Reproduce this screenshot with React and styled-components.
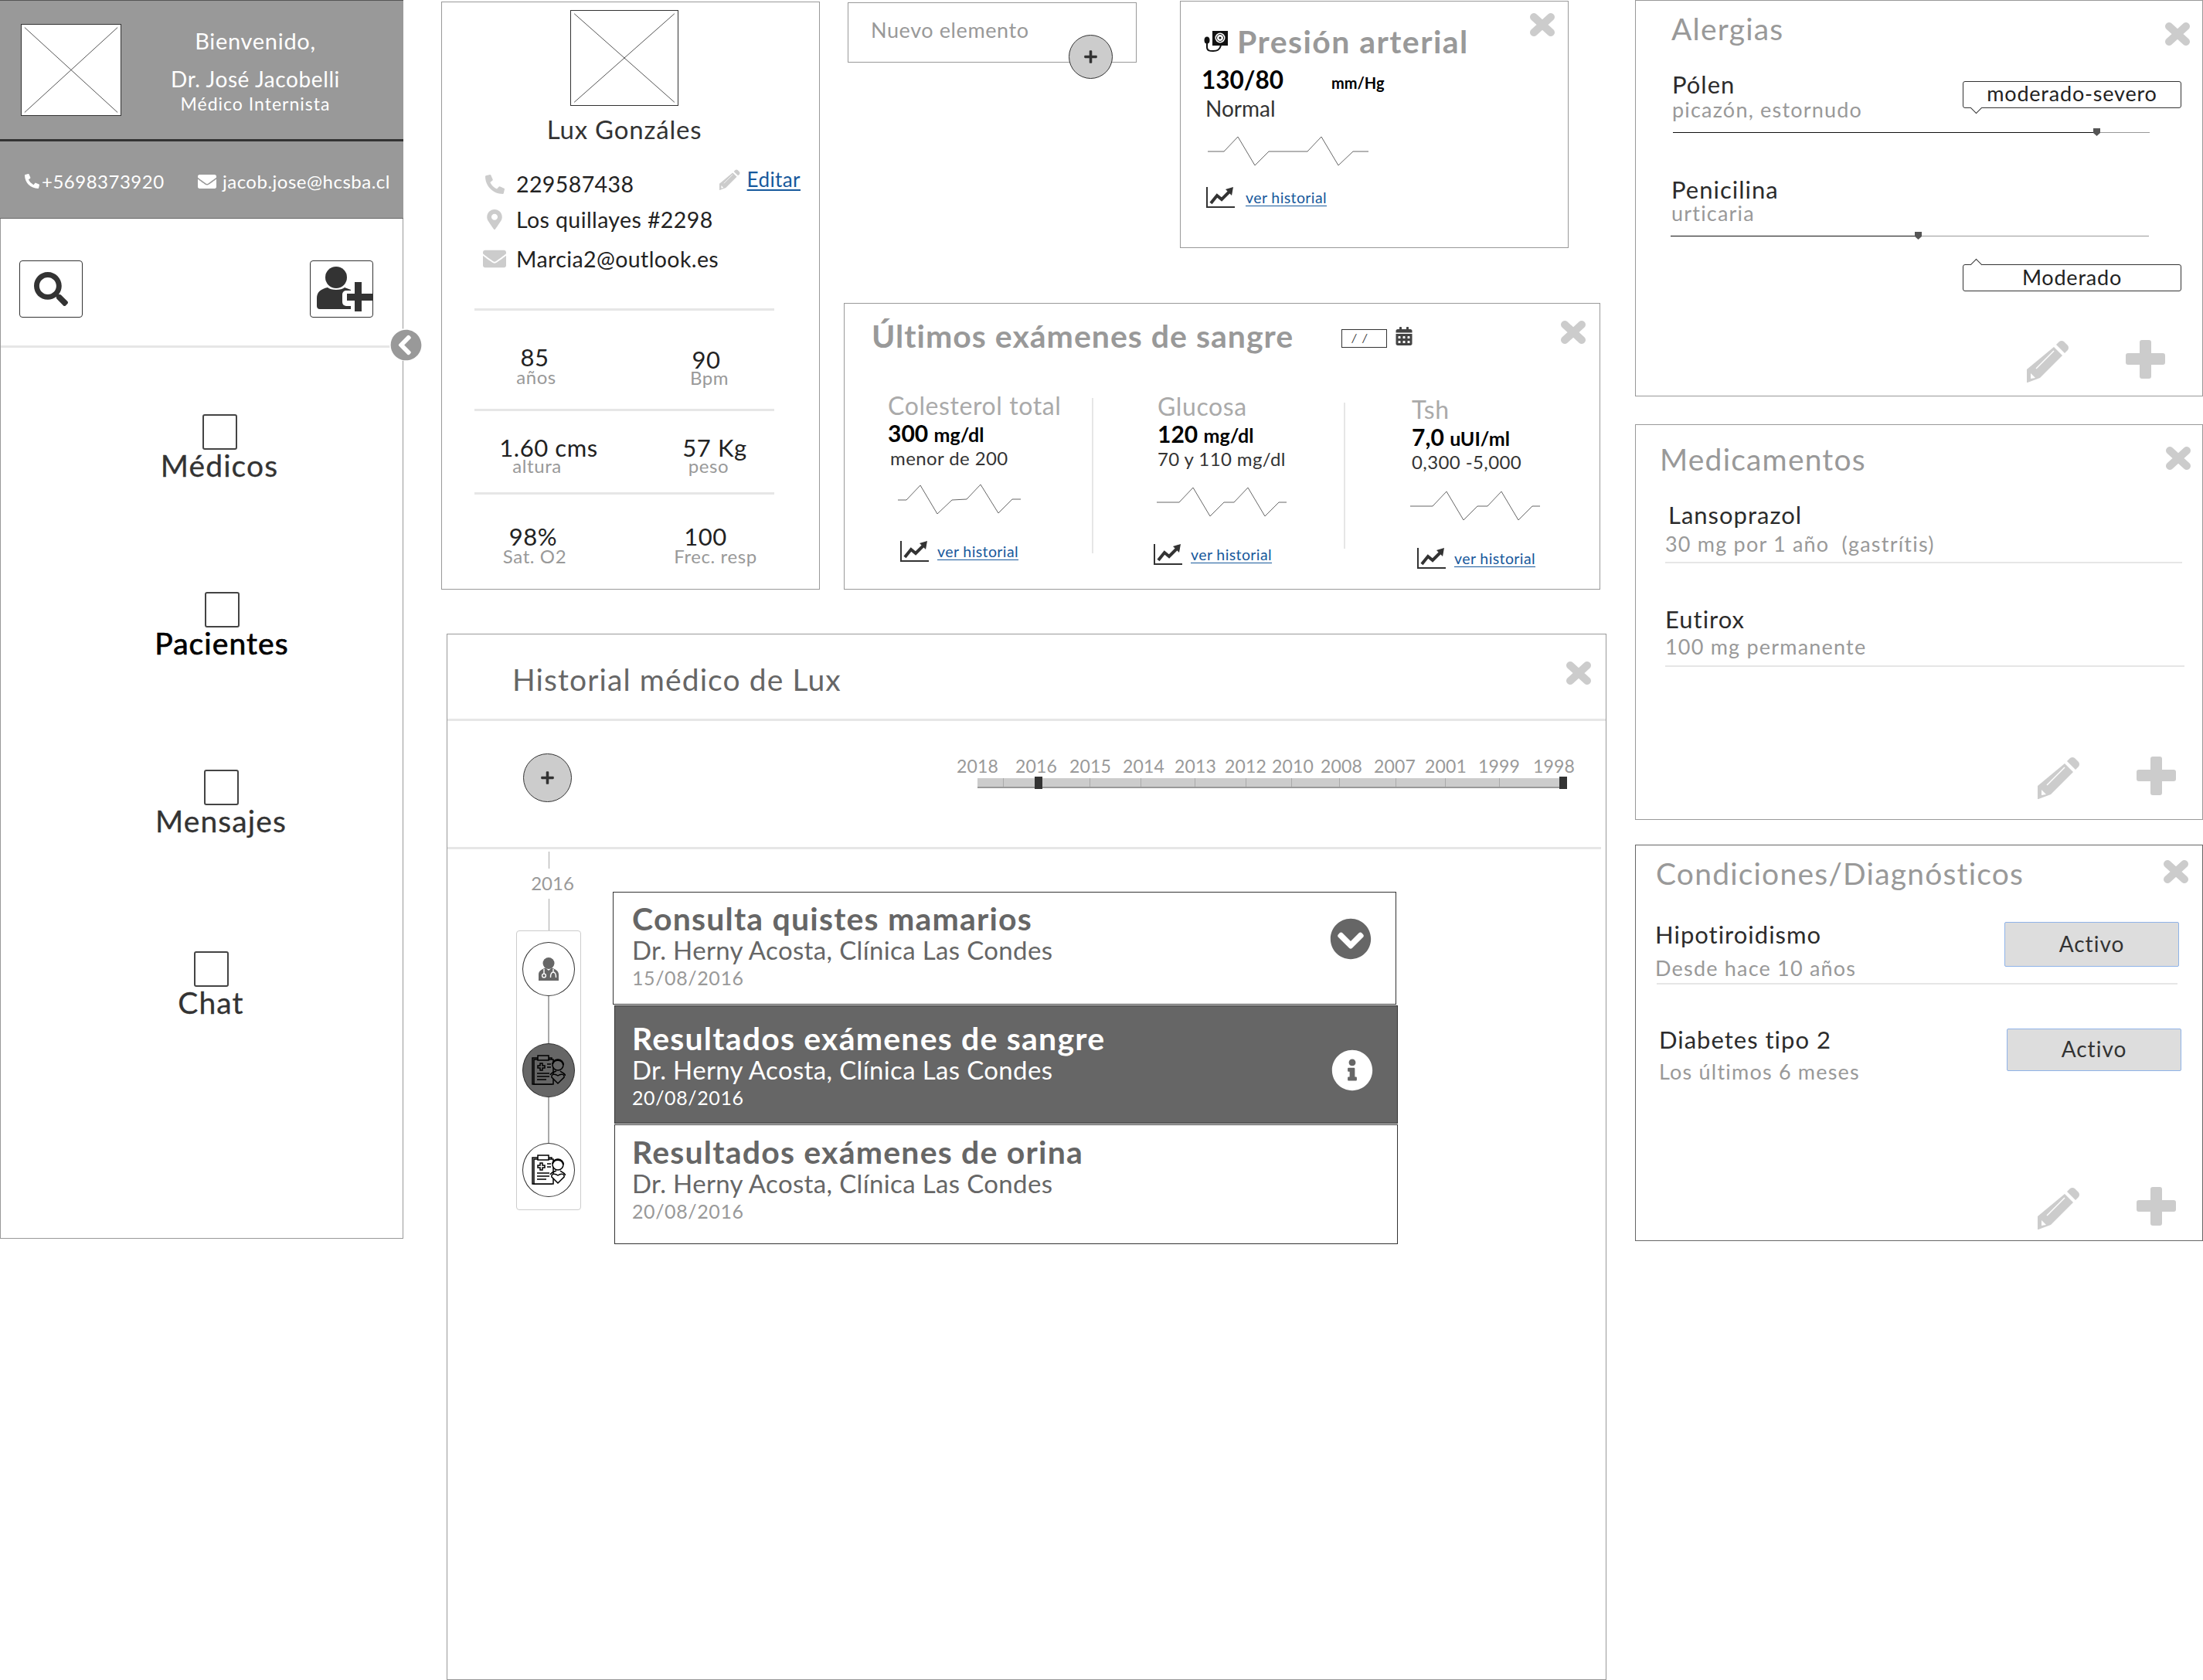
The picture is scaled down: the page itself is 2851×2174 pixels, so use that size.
import React from 'react';
import styled, { createGlobalStyle } from 'styled-components';
import {
  FaPhoneAlt,
  FaEnvelope,
  FaMapMarkerAlt,
  FaSearch,
  FaChevronCircleLeft,
  FaChevronCircleDown,
  FaInfoCircle,
  FaCalendarAlt,
  FaPlus,
} from 'react-icons/fa';

const GlobalStyle = createGlobalStyle`
  html, body { margin: 0; padding: 0; background: #fff; }
  body {
    font-family: "Lato", "Open Sans", sans-serif;
    color: #333;
  }
  * { box-sizing: border-box; }
`;

const CloseIcon = () => (
  <svg width="34" height="32" viewBox="0 0 34 32">
    <path d="M6 6 L28 26 M28 6 L6 26" stroke="#ccc" strokeWidth="10" strokeLinecap="round" fill="none" />
  </svg>
);

const BigPlus = () => (
  <svg width="51" height="50" viewBox="0 0 51 50">
    <rect x="18" y="0" width="15" height="50" rx="3" fill="#ccc" />
    <rect x="0" y="17" width="51" height="15" rx="3" fill="#ccc" />
  </svg>
);

const PencilIcon = ({ size = 55 }) => (
  <svg width={size} height={size} viewBox="0 0 55 55">
    <path d="M38 6 L42 2 Q45 0 48 2 L53 7 Q55 10 53 13 L49 17 Z" fill="#ccc" />
    <path d="M35 9 L46 20 L17 49 L1 55 L0 55 L0 38 Z" fill="#ccc" />
    <path d="M12 37 L35 14" stroke="#fff" strokeWidth="1.5" />
    <path d="M5 43 L11 49 L5 50 Z" fill="#fff" />
  </svg>
);

const Crossed = () => (
  <svg width="100%" height="100%" viewBox="0 0 100 100" preserveAspectRatio="none">
    <path d="M3 3 L97 97 M97 3 L3 97" stroke="#555" strokeWidth="1" vectorEffect="non-scaling-stroke" fill="none" />
  </svg>
);

const AddUserIcon = () => (
  <svg width="80" height="72" viewBox="0 0 80 72">
    <circle cx="33" cy="21" r="14" fill="#333" />
    <path d="M8 58 V48 C8 40 13 36 22 34 C26 38 40 38 44 34 L52 37 V62 H12 C9 62 8 60 8 58 Z" fill="#333" />
    <rect x="41" y="38" width="20" height="20" rx="5" fill="#fff" />
    <rect x="57" y="27" width="9" height="38" fill="#333" />
    <rect x="47" y="42" width="33" height="9" fill="#333" />
  </svg>
);

const CuffIcon = () => (
  <svg width="32" height="30" viewBox="0 0 32 30">
    <rect x="11" y="1" width="20" height="19" fill="#111" />
    <circle cx="21" cy="10" r="6.5" fill="#fff" />
    <circle cx="21" cy="10" r="4.5" fill="none" stroke="#111" strokeWidth="1" />
    <circle cx="21" cy="10" r="1.5" fill="#111" />
    <ellipse cx="4" cy="13" rx="3.5" ry="4.5" fill="#111" />
    <path d="M4 16 V22 C4 27 8 27 12 27 C17 27 20 26 22 20" stroke="#111" strokeWidth="2" fill="none" />
  </svg>
);

const DoctorIcon = () => (
  <svg width="28" height="30" viewBox="0 0 28 30">
    <circle cx="14" cy="7.5" r="7.5" fill="#666" />
    <path d="M1 30 V22 C1 17 6 15 10 13.5 L14 17 L18 13.5 C22 15 27 17 27 22 V30 Z" fill="#666" />
    <path d="M8 15 V21 M20 15 V19 C17 19 16.5 22 16.5 26 M20 19 C23 19 23.5 22 23.5 26" stroke="#fff" strokeWidth="1.4" fill="none" />
    <circle cx="8" cy="23.5" r="2.4" fill="none" stroke="#fff" strokeWidth="1.4" />
  </svg>
);

const ReportIcon = ({ $bg }) => (
  <svg width="44" height="40" viewBox="0 0 44 40">
    <rect x="1" y="4" width="25" height="34" fill={$bg} stroke="#000" strokeWidth="1.5" />
    <rect x="3" y="6" width="25" height="32" fill={$bg} stroke="#000" strokeWidth="1.5" />
    <rect x="8" y="1" width="14" height="6" fill={$bg} stroke="#000" strokeWidth="1.5" />
    <path
      d="M8 14 h3 v-3 h3 v3 h3 v3 h-3 v3 h-3 v-3 h-3 Z M20 12 h5 M20 16 h5 M7 24 h16 M7 28 h16 M7 32 h12"
      stroke="#000"
      strokeWidth="1.5"
      fill="none"
    />
    <circle cx="34" cy="13" r="7" fill={$bg} stroke="#000" strokeWidth="1.5" />
    <path d="M27 12 C29 5 40 5 41 13" stroke="#000" strokeWidth="2.2" fill="none" />
    <path d="M24 26 C26 22 30 22 32 21 M37 21 C39 23 43 24 44 27" stroke="#000" strokeWidth="1.5" fill="none" />
    <path d="M34 37 L26 29 C25 25 30 24 34 27 C38 24 43 25 42 29 Z" fill={$bg} stroke="#000" strokeWidth="1.5" />
  </svg>
);

const TrendIcon = () => (
  <svg width="37" height="27" viewBox="0 0 37 27">
    <path d="M1 0 V26 H37" fill="none" stroke="#333" strokeWidth="2" />
    <path d="M6 21 L14 11 L20 16 L30 6" fill="none" stroke="#333" strokeWidth="4" />
    <path d="M25 3 L35 0 L33 11 Z" fill="#333" />
  </svg>
);

const Spark = ({ xs, ys }) => (
  <SparkSvg width={xs[xs.length - 1]} height="39" viewBox={`0 0 ${xs[xs.length - 1]} 39`}>
    <polyline points={xs.map((x, i) => `${x},${ys[i]}`).join(' ')} fill="none" stroke="#666" strokeWidth="1" />
  </SparkSvg>
);

const HISTORY_LINK = 'ver historial';
const SPARK_A = {
  xs: [0, 11, 29, 51, 70, 89, 107, 130, 148, 159],
  ys: [20, 20, 1, 38, 20, 19, 0, 37, 19, 19],
};
const SPARK_B = {
  xs: [0, 29, 47, 69, 87, 100, 118, 140, 158, 168],
  ys: [19, 19, 0, 37, 19, 19, 0, 37, 19, 19],
};
const SPARK_C = {
  xs: [0, 21, 39, 61, 79, 129, 147, 169, 188, 208],
  ys: [19, 19, 0, 37, 19, 19, 0, 37, 19, 19],
};

const NAV = [
  { label: 'Médicos', top: 86, shift: 46 },
  { label: 'Pacientes', top: 143, shift: 52, active: true },
  { label: 'Mensajes', top: 143, shift: 50 },
  { label: 'Chat', top: 148, shift: 24 },
];

const EXAMS = [
  {
    name: 'Colesterol total', value: '300', unit: 'mg/dl', range: 'menor de 200', spark: SPARK_A,
    left: 56, width: 264, nameTop: 45, rangeDx: 3, sparkTop: 19, sparkDx: 13, linkTop: 34, linkDx: 16,
  },
  {
    name: 'Glucosa', value: '120', unit: 'mg/dl', range: '70 y 110 mg/dl', spark: SPARK_B,
    left: 83, width: 241, nameTop: 46, rangeDx: 0, sparkTop: 22, sparkDx: -1, linkTop: 34, linkDx: -5,
  },
  {
    name: 'Tsh', value: '7,0', unit: 'uUI/ml', range: '0,300 -5,000', spark: SPARK_B,
    left: 86, width: 240, nameTop: 50, rangeDx: 0, sparkTop: 23, sparkDx: -2, linkTop: 34, linkDx: 7,
  },
];

const YEARS = [
  ['2018', 0], ['2016', 24], ['2015', 18], ['2014', 17], ['2013', 15], ['2012', 13],
  ['2010', 9], ['2008', 11], ['2007', 17], ['2001', 14], ['1999', 17], ['1998', 19],
];
const SEGMENTS = [34, 112, 66, 70, 66, 59, 62, 73, 64, 70, 80];

const RECORDS = [
  {
    title: 'Consulta quistes mamarios', date: '15/08/2016', dx: 0, pad: 12, height: 146,
    icon: <FaChevronCircleDown size={54} color="#666" />, iconTop: 33,
  },
  {
    title: 'Resultados exámenes de sangre', date: '20/08/2016', dx: 2, pad: 20, height: 153, dark: true,
    icon: <FaInfoCircle size={54} color="#fff" />, iconTop: 56,
  },
  { title: 'Resultados exámenes de orina', date: '20/08/2016', dx: 2, pad: 13, height: 155 },
];

export default function App() {
  return (
    <Page>
      <GlobalStyle />
      <Sidebar>
        <Welcome>
          <Avatar><Crossed /></Avatar>
          <Greeting>
            <Hello>Bienvenido,</Hello>
            <DoctorName>Dr. José Jacobelli</DoctorName>
            <Specialty>Médico Internista</Specialty>
          </Greeting>
        </Welcome>
        <ContactBar>
          <ContactItem><FaPhoneAlt size={19} />+5698373920</ContactItem>
          <ContactItem $gap={8}><FaEnvelope size={24} />jacob.jose@hcsba.cl</ContactItem>
        </ContactBar>
        <ToolRow>
          <ToolButton><FaSearch size={44} color="#333" /></ToolButton>
          <ToolButton><AddUserIcon /></ToolButton>
        </ToolRow>
        <Collapse><FaChevronCircleLeft size={41} color="#999" /></Collapse>
        <NavList>
          {NAV.map((n) => (
            <NavItem key={n.label} $top={n.top} $shift={n.shift}>
              <NavBox />
              <NavLabel $active={n.active}>{n.label}</NavLabel>
            </NavItem>
          ))}
        </NavList>
      </Sidebar>

      <Middle>
        <TopRow>
          <PatientCard>
            <PatientHead>
              <PatientPhoto><Crossed /></PatientPhoto>
              <PatientName>Lux Gonzáles</PatientName>
            </PatientHead>
            <InfoRow $top={31}>
              <InfoIcon><FaPhoneAlt size={25} color="#ccc" /></InfoIcon>
              <InfoText>229587438</InfoText>
              <EditLink>
                <PencilIcon size={27} />
                <BlueLink $size={26}>Editar</BlueLink>
              </EditLink>
            </InfoRow>
            <InfoRow $top={6}>
              <InfoIcon><FaMapMarkerAlt size={26} color="#ccc" /></InfoIcon>
              <InfoText>Los quillayes #2298</InfoText>
            </InfoRow>
            <InfoRow $top={11}>
              <InfoIcon><FaEnvelope size={32} color="#ccc" /></InfoIcon>
              <InfoText>Marcia2@outlook.es</InfoText>
            </InfoRow>
            <Rule $top={44} />
            <StatRow $height={127} $pad={47}>
              <Stat>
                <StatValue>85</StatValue>
                <StatLabel $gap={2} $dx={2}>años</StatLabel>
              </Stat>
              <Stat $top={3}>
                <StatValue $dx={-3}>90</StatValue>
                <StatLabel $dx={1}>Bpm</StatLabel>
              </Stat>
            </StatRow>
            <Rule />
            <StatRow $height={105} $pad={34}>
              <Stat>
                <StatValue $dx={18}>1.60 cms</StatValue>
                <StatLabel $dx={3}>altura</StatLabel>
              </Stat>
              <Stat>
                <StatValue $dx={8}>57 Kg</StatValue>
                <StatLabel>peso</StatLabel>
              </Stat>
            </StatRow>
            <Rule />
            <StatRow $height={110} $pad={41}>
              <Stat>
                <StatValue $dx={-2}>98%</StatValue>
                <StatLabel $gap={2}>Sat. O2</StatLabel>
              </Stat>
              <Stat>
                <StatValue $dx={-4}>100</StatValue>
                <StatLabel $gap={2} $dx={9}>Frec. resp</StatLabel>
              </Stat>
            </StatRow>
          </PatientCard>

          <TopRight>
            <TopCards>
              <NewItem>
                Nuevo elemento
                <RoundAdd $left={285} $top={41}><FaPlus size={19} color="#333" /></RoundAdd>
              </NewItem>
              <PressureCard>
                <CloseSlot $top={14} $right={16}><CloseIcon /></CloseSlot>
                <PressureHead><CuffIcon /><CardTitle $ls={1.45}>Presión arterial</CardTitle></PressureHead>
                <PressureValue>130/80<PressureUnit>mm/Hg</PressureUnit></PressureValue>
                <PressureState>Normal</PressureState>
                <SparkSlot $top={21} $dx={35}><Spark {...SPARK_C} /></SparkSlot>
                <HistoryRow $top={26} $dx={33} $gap={14}>
                  <TrendIcon />
                  <BlueLink $size={19.5}>{HISTORY_LINK}</BlueLink>
                </HistoryRow>
              </PressureCard>
            </TopCards>

            <BloodCard>
              <CloseSlot $top={21} $right={17}><CloseIcon /></CloseSlot>
              <BloodHead>
                <CardTitle $ls={1}>Últimos exámenes de sangre</CardTitle>
                <DateInput>/ /</DateInput>
                <FaCalendarAlt size={24} color="#444" />
              </BloodHead>
              <ExamRow>
                {EXAMS.map((e, i) => (
                  <React.Fragment key={e.name}>
                    {i > 0 && <ExamDivider $top={i === 1 ? 53 : 59} $height={i === 1 ? 201 : 189} />}
                    <ExamCol $left={e.left} $width={e.width}>
                      <ExamName $top={e.nameTop}>{e.name}</ExamName>
                      <ExamValue>{e.value} <small>{e.unit}</small></ExamValue>
                      <ExamRange $dx={e.rangeDx}>{e.range}</ExamRange>
                      <SparkSlot $top={e.sparkTop} $dx={e.sparkDx}><Spark {...e.spark} /></SparkSlot>
                      <HistoryRow $top={e.linkTop} $dx={e.linkDx} $gap={11}>
                        <TrendIcon />
                        <BlueLink $size={19.5}>{HISTORY_LINK}</BlueLink>
                      </HistoryRow>
                    </ExamCol>
                  </React.Fragment>
                ))}
              </ExamRow>
            </BloodCard>
          </TopRight>
        </TopRow>

        <HistoryPanel>
          <CloseSlot $top={34} $right={18}><CloseIcon /></CloseSlot>
          <HistoryHead>Historial médico de Lux</HistoryHead>
          <HistoryTools>
            <RoundAddInline><FaPlus size={19} color="#333" /></RoundAddInline>
            <Ruler>
              <YearLabels>
                {YEARS.map(([y, gap]) => <YearLabel key={y} $gap={gap}>{y}</YearLabel>)}
              </YearLabels>
              <Track>
                {SEGMENTS.map((w, i) => <Segment key={i} $w={w} />)}
                <TrackHandle $left={74} />
                <TrackHandle $left={753} />
              </Track>
            </Ruler>
          </HistoryTools>
          <Timeline>
            <Rail>
              <Stem $h={22} $top={3} />
              <RailYear>2016</RailYear>
              <Stem $h={41} $top={5} />
              <RailBox>
                <RailDot><DoctorIcon /></RailDot>
                <RailLink $h={61} />
                <RailDot $active><ReportIcon $bg="#666" /></RailDot>
                <RailLink $h={59} />
                <RailDot><ReportIcon $bg="#fff" /></RailDot>
              </RailBox>
            </Rail>
            <Records>
              {RECORDS.map((r) => (
                <Record key={r.title} $dx={r.dx} $dark={r.dark} $pad={r.pad} $height={r.height}>
                  <div>
                    <RecordTitle>{r.title}</RecordTitle>
                    <RecordDoctor>Dr. Herny Acosta, Clínica Las Condes</RecordDoctor>
                    <RecordDate $dark={r.dark}>{r.date}</RecordDate>
                  </div>
                  {r.icon && <RecordIcon $top={r.iconTop - r.pad}>{r.icon}</RecordIcon>}
                </Record>
              ))}
            </Records>
          </Timeline>
        </HistoryPanel>
      </Middle>

      <RightColumn>
        <SidePanel $height={513}>
          <CloseSlot $top={27} $right={15}><CloseIcon /></CloseSlot>
          <SideTitle $top={14} $left={46}>Alergias</SideTitle>
          <AllergyRow $top={32}>
            <div>
              <ItemName>Pólen</ItemName>
              <ItemNote $top={0}>picazón, estornudo</ItemNote>
            </div>
            <Bubble $top={14}>moderado-severo</Bubble>
          </AllergyRow>
          <SliderLine $top={14} $left={48} $width={617} $value={548} />
          <ItemBlock $top={55} $left={46}>
            <ItemName>Penicilina</ItemName>
            <ItemNote $top={-2}>urticaria</ItemNote>
          </ItemBlock>
          <SliderLine $top={14} $left={45} $width={619} $value={320} />
          <Bubble $top={36} $up $push>Moderado</Bubble>
          <PanelActions $right={48} $bottom={17}>
            <PencilIcon />
            <BigPlus />
          </PanelActions>
        </SidePanel>

        <SidePanel $height={512} $top={36}>
          <CloseSlot $top={27} $right={14}><CloseIcon /></CloseSlot>
          <SideTitle $top={22} $left={31}>Medicamentos</SideTitle>
          <ItemBlock $top={32} $left={42}>
            <ItemName>Lansoprazol</ItemName>
          </ItemBlock>
          <ItemBlock $top={4} $left={38}>
            <ItemNote>30 mg por 1 año&nbsp; (gastrítis)</ItemNote>
          </ItemBlock>
          <ItemLine $top={8} $left={38} $width={669} />
          <ItemBlock $top={54} $left={38}>
            <ItemName>Eutirox</ItemName>
            <ItemNote $top={3}>100 mg permanente</ItemNote>
          </ItemBlock>
          <ItemLine $top={9} $left={38} $width={672} />
          <PanelActions $right={34} $bottom={26}>
            <PencilIcon />
            <BigPlus />
          </PanelActions>
        </SidePanel>

        <SidePanel $height={513} $top={32} $dark>
          <CloseSlot $top={18} $right={17}><CloseIcon /></CloseSlot>
          <SideTitle $top={14} $left={26}>Condiciones/Diagnósticos</SideTitle>
          <ConditionRow $top={39} $left={25} $right={30}>
            <div>
              <ItemName>Hipotiroidismo</ItemName>
              <ItemNote $top={11}>Desde hace 10 años</ItemNote>
            </div>
            <StatusButton $height={58} $top={2}>Activo</StatusButton>
          </ConditionRow>
          <ItemLine $top={4} $left={27} $width={674} />
          <ConditionRow $top={53} $left={30} $right={27}>
            <div>
              <ItemName>Diabetes tipo 2</ItemName>
              <ItemNote $top={9}>Los últimos 6 meses</ItemNote>
            </div>
            <StatusButton $height={55} $top={4}>Activo</StatusButton>
          </ConditionRow>
          <PanelActions $right={34} $bottom={14}>
            <PencilIcon />
            <BigPlus />
          </PanelActions>
        </SidePanel>
      </RightColumn>
    </Page>
  );
}

const Page = styled.div`
  display: flex;
  align-items: flex-start;
  width: 2851px;
  height: 2174px;
  overflow: hidden;
  background: #fff;
`;

const Sidebar = styled.aside`
  position: relative;
  width: 522px;
  height: 1603px;
  border-right: 1px solid #999;
  border-left: 1px solid #999;
  border-bottom: 1px solid #999;
  flex-shrink: 0;
`;

const Welcome = styled.div`
  display: flex;
  height: 183px;
  padding: 30px 0 0 27px;
  margin-left: -1px;
  margin-right: -1px;
  background: #999;
  border-top: 1px solid #555;
  border-bottom: 3px solid #333;
  color: #fff;
`;

const Avatar = styled.div`
  width: 130px;
  height: 119px;
  background: #fff;
  border: 1px solid #333;
`;

const Greeting = styled.div`
  flex: 1;
  display: flex;
  flex-direction: column;
  align-items: center;
  padding-right: 18px;
`;

const Hello = styled.div`
  font-size: 29px;
  line-height: 44px;
  letter-spacing: 0.7px;
`;

const DoctorName = styled.div`
  margin-top: 9px;
  font-size: 28px;
  line-height: 36px;
  letter-spacing: 0.6px;
`;

const Specialty = styled.div`
  font-size: 23px;
  line-height: 28px;
  letter-spacing: 1px;
`;

const ContactBar = styled.div`
  display: flex;
  justify-content: space-between;
  align-items: center;
  height: 100px;
  padding: 4px 17px 0 32px;
  margin: 0 -1px;
  background: #999;
  border-bottom: 1px solid #666;
  color: #fff;
`;

const ContactItem = styled.div`
  display: flex;
  align-items: center;
  gap: ${(p) => p.$gap || 3}px;
  font-size: 24px;
  letter-spacing: 0.5px;
`;

const ToolRow = styled.div`
  display: flex;
  justify-content: space-between;
  height: 167px;
  padding: 54px 38px 0 24px;
  border-bottom: 3px solid #e6e6e6;
`;

const ToolButton = styled.div`
  display: flex;
  align-items: center;
  justify-content: center;
  width: 82px;
  height: 74px;
  border: 1px solid #333;
  border-radius: 4px;
`;

const Collapse = styled.div`
  position: absolute;
  left: 503px;
  top: 425px;
  display: flex;
  width: 42px;
  height: 42px;
  align-items: center;
  justify-content: center;
  border-radius: 50%;
  background: #fff;
`;

const NavList = styled.nav`
  display: flex;
  flex-direction: column;
`;

const NavItem = styled.div`
  display: flex;
  flex-direction: column;
  align-items: center;
  margin-top: ${(p) => p.$top}px;
  padding-left: ${(p) => p.$shift}px;
`;

const NavBox = styled.div`
  width: 45px;
  height: 46px;
  margin-bottom: -1px;
  border: 2px solid #444;
  border-radius: 3px;
`;

const NavLabel = styled.div`
  font-size: 39px;
  line-height: 42px;
  letter-spacing: 1.1px;
  color: ${(p) => (p.$active ? '#000' : '#333')};
  -webkit-text-stroke: ${(p) => (p.$active ? '0.7px' : '0.3px')};
`;

const Middle = styled.main`
  display: flex;
  flex-direction: column;
  width: 1509px;
  height: 2174px;
  margin-left: 49px;
  flex-shrink: 0;
`;

const TopRow = styled.div`
  display: flex;
  align-items: flex-start;
  height: 763px;
  flex-shrink: 0;
`;

const Panel = styled.section`
  position: relative;
  background: #fff;
  border: 1px solid #999;
`;

const PatientCard = styled(Panel)`
  width: 490px;
  height: 761px;
  margin-top: 2px;
  flex-shrink: 0;
`;

const PatientHead = styled.div`
  display: flex;
  flex-direction: column;
  align-items: center;
  padding: 10px 16px 0 0;
`;

const PatientPhoto = styled.div`
  width: 140px;
  height: 124px;
  border: 1px solid #333;
`;

const PatientName = styled.div`
  margin-top: 10px;
  font-size: 33px;
  line-height: 40px;
  letter-spacing: 0.8px;
`;

const InfoRow = styled.div`
  display: flex;
  align-items: center;
  height: 40px;
  margin-top: ${(p) => p.$top}px;
  padding-left: 53px;
  gap: 13px;
`;

const InfoIcon = styled.div`
  display: flex;
  justify-content: center;
  width: 30px;
  flex-shrink: 0;
`;

const InfoText = styled.div`
  font-size: 28.5px;
  letter-spacing: 0.4px;
  color: #222;
`;

const EditLink = styled.div`
  display: flex;
  align-items: center;
  gap: 9px;
  margin: -12px 0 0 auto;
  padding-right: 24px;
`;

const BlueLink = styled.a`
  font-size: ${(p) => p.$size}px;
  letter-spacing: 0.4px;
  color: #17599c;
  text-decoration: underline;
  text-underline-offset: 3px;
`;

const Rule = styled.div`
  height: 3px;
  width: 388px;
  margin: ${(p) => p.$top || 0}px 0 0 42px;
  background: #e6e6e6;
`;

const StatRow = styled.div`
  display: grid;
  grid-template-columns: 220px 230px;
  height: ${(p) => p.$height}px;
  padding: ${(p) => p.$pad}px 0 0 10px;
`;

const Stat = styled.div`
  display: flex;
  flex-direction: column;
  align-items: center;
  margin-top: ${(p) => p.$top || 0}px;
`;

const StatValue = styled.div`
  font-size: 31px;
  line-height: 26px;
  letter-spacing: 0.6px;
  margin-left: ${(p) => (p.$dx || 0) * 2}px;
  color: #222;
`;

const StatLabel = styled.div`
  font-size: 24px;
  line-height: 22px;
  letter-spacing: 0.6px;
  margin-top: ${(p) => p.$gap || 0}px;
  margin-left: ${(p) => (p.$dx || 0) * 2}px;
  color: #999;
`;

const TopRight = styled.div`
  display: flex;
  flex-direction: column;
  width: 979px;
  margin-left: 31px;
`;

const TopCards = styled.div`
  display: flex;
  align-items: flex-start;
  height: 392px;
`;

const NewItem = styled(Panel)`
  width: 374px;
  height: 78px;
  margin: 3px 0 0 5px;
  padding: 15px 0 0 29px;
  font-size: 27px;
  line-height: 40px;
  letter-spacing: 0.6px;
  color: #999;
`;

const RoundAdd = styled.div`
  position: absolute;
  left: ${(p) => p.$left}px;
  top: ${(p) => p.$top}px;
  display: flex;
  align-items: center;
  justify-content: center;
  width: 57px;
  height: 57px;
  border-radius: 50%;
  border: 1px solid #333;
  background: #ccc;
`;

const PressureCard = styled(Panel)`
  width: 503px;
  height: 320px;
  margin: 1px 0 0 56px;
  padding: 28px 0 0 0;
`;

const PressureHead = styled.div`
  display: flex;
  align-items: center;
  gap: 11px;
  padding-left: 30px;
`;

const CardTitle = styled.h2`
  margin: 0;
  font-size: 41px;
  font-weight: 700;
  line-height: 48px;
  letter-spacing: ${(p) => p.$ls}px;
  color: #999;
`;

const PressureValue = styled.div`
  display: flex;
  align-items: baseline;
  margin-top: 7px;
  padding-left: 27px;
  font-size: 31.5px;
  font-weight: 700;
  line-height: 36px;
  color: #000;
`;

const PressureUnit = styled.span`
  margin-left: 62px;
  font-size: 20px;
`;

const PressureState = styled.div`
  margin-top: -1px;
  padding-left: 32px;
  font-size: 28px;
  line-height: 32px;
`;

const SparkSvg = styled.svg`
  display: block;
`;

const SparkSlot = styled.div`
  margin: ${(p) => p.$top}px 0 0 ${(p) => p.$dx}px;
`;

const HistoryRow = styled.div`
  display: flex;
  align-items: center;
  gap: ${(p) => p.$gap}px;
  margin: ${(p) => p.$top}px 0 0 ${(p) => p.$dx}px;
`;

const BloodCard = styled(Panel)`
  height: 371px;
`;

const BloodHead = styled.div`
  display: flex;
  align-items: center;
  height: 69px;
  padding: 15px 0 0 35px;
`;

const DateInput = styled.div`
  width: 59px;
  height: 24px;
  margin: 6px 10px 0 62px;
  padding-left: 12px;
  border: 1px solid #333;
  font-size: 15px;
  line-height: 20px;
  letter-spacing: 2px;
  font-style: italic;
`;

const ExamRow = styled.div`
  display: flex;
  align-items: flex-start;
`;

const ExamCol = styled.div`
  display: flex;
  flex-direction: column;
  width: ${(p) => p.$width}px;
  margin-left: ${(p) => p.$left}px;
`;

const ExamDivider = styled.div`
  width: 2px;
  height: ${(p) => p.$height}px;
  margin-top: ${(p) => p.$top}px;
  background: #e6e6e6;
`;

const ExamName = styled.div`
  margin-top: ${(p) => p.$top}px;
  font-size: 32px;
  line-height: 36px;
  letter-spacing: 0.6px;
  color: #aaa;
`;

const ExamValue = styled.div`
  margin-top: 1px;
  font-size: 30px;
  font-weight: 700;
  line-height: 32px;
  color: #000;
  small {
    font-size: 25px;
  }
`;

const ExamRange = styled.div`
  margin-left: ${(p) => p.$dx}px;
  font-size: 24px;
  line-height: 30px;
  letter-spacing: 0.4px;
`;

const HistoryPanel = styled(Panel)`
  flex: 1;
  width: 1501px;
  margin: 57px 0 0 7px;
`;

const HistoryHead = styled.div`
  height: 112px;
  padding: 33px 0 0 84px;
  border-bottom: 3px solid #e6e6e6;
  font-size: 39px;
  line-height: 50px;
  letter-spacing: 1.1px;
  color: #666;
`;

const HistoryTools = styled.div`
  display: flex;
  align-items: flex-start;
  height: 166px;
  margin-right: 6px;
  padding: 42px 0 0 98px;
  border-bottom: 3px solid #e6e6e6;
`;

const RoundAddInline = styled.div`
  display: flex;
  align-items: center;
  justify-content: center;
  width: 63px;
  height: 63px;
  border-radius: 50%;
  border: 1px solid #333;
  background: #ccc;
`;

const Ruler = styled.div`
  margin: 1px 0 0 498px;
`;

const YearLabels = styled.div`
  display: flex;
`;

const YearLabel = styled.span`
  width: 52px;
  margin-left: ${(p) => p.$gap}px;
  text-align: center;
  white-space: nowrap;
  font-size: 23px;
  line-height: 30px;
  letter-spacing: 0.2px;
  color: #999;
`;

const Track = styled.div`
  position: relative;
  display: flex;
  width: 756px;
  height: 13px;
  margin: 1px 0 0 27px;
  background: #ccc;
  border-bottom: 2px solid #999;
`;

const Segment = styled.span`
  width: ${(p) => p.$w}px;
  height: 100%;
  border-right: 1px solid #aaa;
`;

const TrackHandle = styled.span`
  position: absolute;
  left: ${(p) => p.$left}px;
  top: -2px;
  width: 10px;
  height: 16px;
  background: #333;
`;

const Timeline = styled.div`
  display: flex;
  align-items: flex-start;
`;

const Rail = styled.div`
  display: flex;
  flex-direction: column;
  align-items: center;
  width: 84px;
  margin-left: 89px;
`;

const Stem = styled.span`
  width: 1px;
  height: ${(p) => p.$h}px;
  margin-top: ${(p) => p.$top}px;
  background: #aaa;
`;

const RailYear = styled.div`
  margin: 4px 0 0 10px;
  font-size: 24px;
  line-height: 30px;
  color: #999;
`;

const RailBox = styled.div`
  display: flex;
  flex-direction: column;
  align-items: center;
  width: 84px;
  height: 362px;
  padding-top: 14px;
  border: 1px solid #ccc;
  border-radius: 4px;
`;

const RailDot = styled.div`
  display: flex;
  align-items: center;
  justify-content: center;
  width: 68px;
  height: 70px;
  border-radius: 50%;
  border: 1px solid #333;
  background: ${(p) => (p.$active ? '#666' : '#fff')};
`;

const RailLink = styled.span`
  width: 2px;
  height: ${(p) => p.$h}px;
  background: #aaa;
`;

const Records = styled.div`
  display: flex;
  flex-direction: column;
  width: 1018px;
  margin: 55px 0 0 41px;
`;

const Record = styled.article`
  display: flex;
  justify-content: space-between;
  align-items: flex-start;
  width: 1014px;
  height: ${(p) => p.$height}px;
  margin-left: ${(p) => p.$dx}px;
  padding: ${(p) => p.$pad}px 31px 0 ${(p) => 24 - p.$dx}px;
  border: 1px solid #333;
  background: ${(p) => (p.$dark ? '#666' : '#fff')};
  color: ${(p) => (p.$dark ? '#fff' : '#666')};
  & + & {
    margin-top: 1px;
  }
`;

const RecordTitle = styled.h3`
  margin: 0;
  font-size: 41px;
  font-weight: 700;
  line-height: 44px;
  letter-spacing: 1.2px;
`;

const RecordDoctor = styled.div`
  font-size: 33px;
  line-height: 36px;
  letter-spacing: 0.35px;
`;

const RecordDate = styled.div`
  margin-top: 3px;
  font-size: 25px;
  line-height: 30px;
  letter-spacing: 0.6px;
  color: ${(p) => (p.$dark ? '#fff' : '#999')};
`;

const RecordIcon = styled.div`
  display: flex;
  margin-top: ${(p) => p.$top}px;
`;

const RightColumn = styled.div`
  display: flex;
  flex-direction: column;
  width: 735px;
  margin-left: 36px;
  flex-shrink: 0;
`;

const SidePanel = styled(Panel)`
  display: flex;
  flex-direction: column;
  height: ${(p) => p.$height}px;
  margin-top: ${(p) => p.$top || 0}px;
  border-color: ${(p) => (p.$dark ? '#666' : '#999')};
`;

const CloseSlot = styled.div`
  position: absolute;
  top: ${(p) => p.$top}px;
  right: ${(p) => p.$right}px;
  display: flex;
`;

const SideTitle = styled.h2`
  margin: ${(p) => p.$top}px 0 0 ${(p) => p.$left}px;
  font-size: 39px;
  font-weight: 400;
  line-height: 44px;
  letter-spacing: 1.2px;
  color: #999;
`;

const AllergyRow = styled.div`
  display: flex;
  justify-content: space-between;
  align-items: flex-start;
  margin-top: ${(p) => p.$top}px;
  padding: 0 27px 0 47px;
`;

const ItemBlock = styled.div`
  margin: ${(p) => p.$top}px 0 0 ${(p) => p.$left}px;
`;

const ItemName = styled.div`
  font-size: 31px;
  line-height: 36px;
  letter-spacing: 1px;
  color: #2b2b2b;
`;

const ItemNote = styled.div`
  margin-top: ${(p) => p.$top ?? 1}px;
  font-size: 27px;
  line-height: 30px;
  letter-spacing: 1.2px;
  color: #999;
`;

const Bubble = styled.div`
  position: relative;
  width: 283px;
  height: 35px;
  margin-top: ${(p) => p.$top}px;
  margin-left: ${(p) => (p.$push ? 'auto' : '0')};
  margin-right: ${(p) => (p.$push ? '27px' : '0')};
  border: 1px solid #333;
  border-radius: 3px;
  text-align: center;
  font-size: 27px;
  line-height: ${(p) => (p.$up ? 32 : 30)}px;
  letter-spacing: 0.8px;
  color: #222;
  &::after {
    content: '';
    position: absolute;
    left: 11px;
    ${(p) => (p.$up ? 'top: -6px;' : 'bottom: -6px;')}
    width: 10px;
    height: 10px;
    background: #fff;
    border: 1px solid #333;
    border-width: ${(p) => (p.$up ? '1px 0 0 1px' : '0 1px 1px 0')};
    transform: rotate(45deg);
  }
`;

const SliderLine = styled.div`
  position: relative;
  height: 1px;
  width: ${(p) => p.$width}px;
  margin: ${(p) => p.$top}px 0 0 ${(p) => p.$left}px;
  background: linear-gradient(to right, #111 ${(p) => p.$value}px, #999 ${(p) => p.$value}px);
  &::after {
    content: '';
    position: absolute;
    left: ${(p) => p.$value - 4}px;
    top: -5px;
    width: 9px;
    height: 10px;
    background: #555;
    clip-path: polygon(0 0, 100% 0, 100% 60%, 50% 100%, 0 60%);
  }
`;

const ItemLine = styled.div`
  width: ${(p) => p.$width}px;
  height: 2px;
  margin: ${(p) => p.$top}px 0 0 ${(p) => p.$left}px;
  background: #e6e6e6;
`;

const ConditionRow = styled.div`
  display: flex;
  justify-content: space-between;
  align-items: flex-start;
  margin: ${(p) => p.$top}px ${(p) => p.$right}px 0 ${(p) => p.$left}px;
`;

const StatusButton = styled.button`
  width: 226px;
  height: ${(p) => p.$height}px;
  margin-top: ${(p) => p.$top || 0}px;
  padding: 0 0 3px;
  background: #ddd;
  border: 1px solid #8fb3e8;
  border-radius: 2px;
  font-family: inherit;
  font-size: 28px;
  letter-spacing: 1px;
  color: #333;
`;

const PanelActions = styled.div`
  display: flex;
  align-items: flex-start;
  justify-content: flex-end;
  gap: 73px;
  margin-top: auto;
  padding: 0 ${(p) => p.$right}px ${(p) => p.$bottom}px 0;
`;
